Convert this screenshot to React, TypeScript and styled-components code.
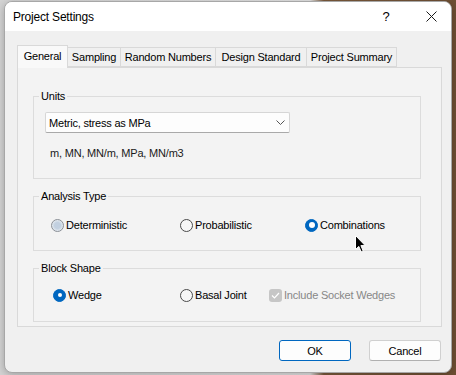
import React from 'react';
import styled, { createGlobalStyle } from 'styled-components';

const GlobalStyle = createGlobalStyle`
  html, body {
    margin: 0;
    padding: 0;
  }
  body {
    width: 456px;
    height: 375px;
    overflow: hidden;
    background: linear-gradient(90deg, #d4d4d4 0%, #e4e4e4 68%, #7b5a3c 71%, #6e4f33 100%);
    font-family: 'Liberation Sans', Arial, sans-serif;
    font-size: 11px;
    letter-spacing: -0.2px;
    color: #000;
  }
`;

const Window = styled.div`
  position: relative;
  margin: 1px 0 0 4px;
  width: 448px;
  height: 372px;
  box-sizing: border-box;
  border: 1px solid #a7a7a7;
  border-radius: 8px;
  background: #f0f0f0;
  overflow: hidden;
  display: flex;
  flex-direction: column;
  box-shadow: 0 2px 8px rgba(0, 0, 0, 0.25);
`;

const TitleBar = styled.div`
  height: 29px;
  flex-shrink: 0;
  background: #ffffff;
  display: flex;
  align-items: center;
  padding-left: 8px;
`;

const Title = styled.div`
  flex: 1;
  font-size: 12px;
  letter-spacing: -0.2px;
`;

const TitleButton = styled.div<{ $w: number; $pr?: number }>`
  width: ${(p) => p.$w}px;
  height: 29px;
  box-sizing: border-box;
  padding-right: ${(p) => p.$pr ?? 0}px;
  display: flex;
  align-items: center;
  justify-content: center;
  font-size: 13px;
`;

const Body = styled.div`
  flex: 1;
  display: flex;
  flex-direction: column;
  padding: 14px 9px 0 12px;
`;

const TabStrip = styled.div`
  display: flex;
  align-items: flex-end;
  height: 22px;
`;

const Tab = styled.div<{ $w: number; $active?: boolean }>`
  position: relative;
  z-index: ${(p) => (p.$active ? 1 : 0)};
  width: ${(p) => p.$w}px;
  height: ${(p) => (p.$active ? 23 : 20)}px;
  margin-bottom: ${(p) => (p.$active ? -1 : 0)}px;
  margin-left: -1px;
  box-sizing: border-box;
  border: 1px solid #d9d9d9;
  border-bottom: ${(p) => (p.$active ? 'none' : '1px solid #d9d9d9')};
  background: ${(p) => (p.$active ? '#f9f9f9' : '#f0f0f0')};
  display: flex;
  align-items: center;
  justify-content: center;
  padding-bottom: ${(p) => (p.$active ? 2 : 0)}px;
  white-space: nowrap;

  &:first-child {
    margin-left: 0;
  }
`;

const Panel = styled.div`
  border: 1px solid #d9d9d9;
  background: #f3f3f3;
  padding: 22px 20px 4px 15px;
  display: flex;
  flex-direction: column;
  gap: 11px;
`;

const Group = styled.fieldset<{ $pt: number; $pb: number }>`
  margin: 0;
  min-width: 0;
  border: 1px solid #dcdcdc;
  padding: ${(p) => p.$pt}px 0 ${(p) => p.$pb}px 0;
`;

const Legend = styled.legend`
  margin-left: 5px;
  padding: 0 2px;
  line-height: 13px;
`;

const Combo = styled.div`
  margin-left: 11px;
  width: 245px;
  height: 21px;
  box-sizing: border-box;
  background: #fdfdfd;
  border: 1px solid #d6d6d6;
  border-bottom-color: #a9a9a9;
  border-radius: 2px;
  display: flex;
  align-items: center;
  justify-content: space-between;
  padding: 0 4px 0 3px;
`;

const UnitsText = styled.div`
  margin: 14px 0 0 16px;
  line-height: 13px;
  color: #1a1a1a;
`;

const OptionRow = styled.div<{ $indent: number }>`
  display: flex;
  align-items: center;
  height: 14px;
  padding-left: ${(p) => p.$indent}px;
`;

const Option = styled.div<{ $w?: number; $disabled?: boolean }>`
  display: flex;
  align-items: center;
  gap: 2px;
  width: ${(p) => (p.$w ? `${p.$w}px` : 'auto')};
  flex-shrink: 0;
  color: ${(p) => (p.$disabled ? '#878787' : '#000')};
  white-space: nowrap;
`;

type RadioState = 'off' | 'hover' | 'on';

const Radio = styled.span<{ $state: RadioState; $dot?: number }>`
  width: 13px;
  height: 13px;
  box-sizing: border-box;
  border-radius: 50%;
  flex-shrink: 0;
  display: flex;
  align-items: center;
  justify-content: center;
  border: 1px solid
    ${(p) => (p.$state === 'on' ? '#0067c0' : p.$state === 'hover' ? '#8a8f96' : '#4a4a4a')};
  background: ${(p) =>
    p.$state === 'on'
      ? '#0067c0'
      : p.$state === 'hover'
      ? 'radial-gradient(circle, #c2d0e0 0 38%, #d6dfe9 58%, #eef1f4 82%)'
      : '#f7f7f7'};

  &::after {
    content: '';
    display: ${(p) => (p.$state === 'on' ? 'block' : 'none')};
    width: ${(p) => p.$dot ?? 5}px;
    height: ${(p) => p.$dot ?? 5}px;
    border-radius: 50%;
    background: #ffffff;
  }
`;

const CheckBox = styled.span`
  width: 13px;
  height: 13px;
  box-sizing: border-box;
  border-radius: 3px;
  background: #c6c6c6;
  display: flex;
  align-items: center;
  justify-content: center;
  flex-shrink: 0;
`;

const ButtonRow = styled.div`
  display: flex;
  justify-content: flex-end;
  gap: 18px;
  margin-top: 13px;
  padding-right: 1px;
`;

const Button = styled.div<{ $default?: boolean }>`
  width: 72px;
  height: 21px;
  box-sizing: border-box;
  border-radius: 3px;
  background: #fdfdfd;
  border: 1px solid ${(p) => (p.$default ? '#0067c0' : '#d0d0d0')};
  border-bottom-color: ${(p) => (p.$default ? '#0067c0' : '#b0b0b0')};
  display: flex;
  align-items: center;
  justify-content: center;
`;

const Cursor = styled.svg`
  position: absolute;
  left: 350px;
  top: 233px;
`;

const tabs = [
  { label: 'General', w: 51 },
  { label: 'Sampling', w: 54 },
  { label: 'Random Numbers', w: 96 },
  { label: 'Design Standard', w: 92 },
  { label: 'Project Summary', w: 91 },
];

const App: React.FC = () => {
  return (
    <>
      <GlobalStyle />
      <Window>
        <TitleBar>
          <Title>Project Settings</Title>
          <TitleButton $w={46} $pr={4}>?</TitleButton>
          <TitleButton $w={40}>
            <svg width="11" height="11" viewBox="0 0 11 11">
              <path d="M0.5 0.5 L10.5 10.5 M10.5 0.5 L0.5 10.5" stroke="#1a1a1a" strokeWidth="1" />
            </svg>
          </TitleButton>
        </TitleBar>
        <Body>
          <TabStrip>
            {tabs.map((t, i) => (
              <Tab key={t.label} $w={t.w} $active={i === 0}>
                {t.label}
              </Tab>
            ))}
          </TabStrip>
          <Panel>
            <Group $pt={9} $pb={18}>
              <Legend>Units</Legend>
              <Combo>
                <span>Metric, stress as MPa</span>
                <svg width="9" height="5" viewBox="0 0 9 5">
                  <path d="M0.5 0.5 L4.5 4.5 L8.5 0.5" fill="none" stroke="#555" strokeWidth="1" />
                </svg>
              </Combo>
              <UnitsText>m, MN, MN/m, MPa, MN/m3</UnitsText>
            </Group>
            <Group $pt={15} $pb={18}>
              <Legend>Analysis Type</Legend>
              <OptionRow $indent={17}>
                <Option $w={129}>
                  <Radio $state="hover" />
                  Deterministic
                </Option>
                <Option $w={125}>
                  <Radio $state="off" />
                  Probabilistic
                </Option>
                <Option>
                  <Radio $state="on" $dot={6} />
                  Combinations
                </Option>
              </OptionRow>
            </Group>
            <Group $pt={13} $pb={19}>
              <Legend>Block Shape</Legend>
              <OptionRow $indent={19}>
                <Option $w={127}>
                  <Radio $state="on" $dot={4} />
                  Wedge
                </Option>
                <Option $w={89}>
                  <Radio $state="off" />
                  Basal Joint
                </Option>
                <Option $disabled>
                  <CheckBox>
                    <svg width="9" height="7" viewBox="0 0 9 7">
                      <path d="M1 3.5 L3.5 6 L8 1" fill="none" stroke="#fff" strokeWidth="1.2" />
                    </svg>
                  </CheckBox>
                  Include Socket Wedges
                </Option>
              </OptionRow>
            </Group>
          </Panel>
          <ButtonRow>
            <Button $default>OK</Button>
            <Button>Cancel</Button>
          </ButtonRow>
        </Body>
        <Cursor width="12" height="18" viewBox="0 0 12 18">
          <path
            d="M0.5 0.5 L0.5 14.5 L3.8 11.4 L6.2 16.8 L8.2 15.9 L5.9 10.6 L10.2 10.6 Z"
            fill="#000"
            stroke="#fff"
            strokeWidth="1"
            strokeLinejoin="round"
          />
        </Cursor>
      </Window>
    </>
  );
};

export default App;
